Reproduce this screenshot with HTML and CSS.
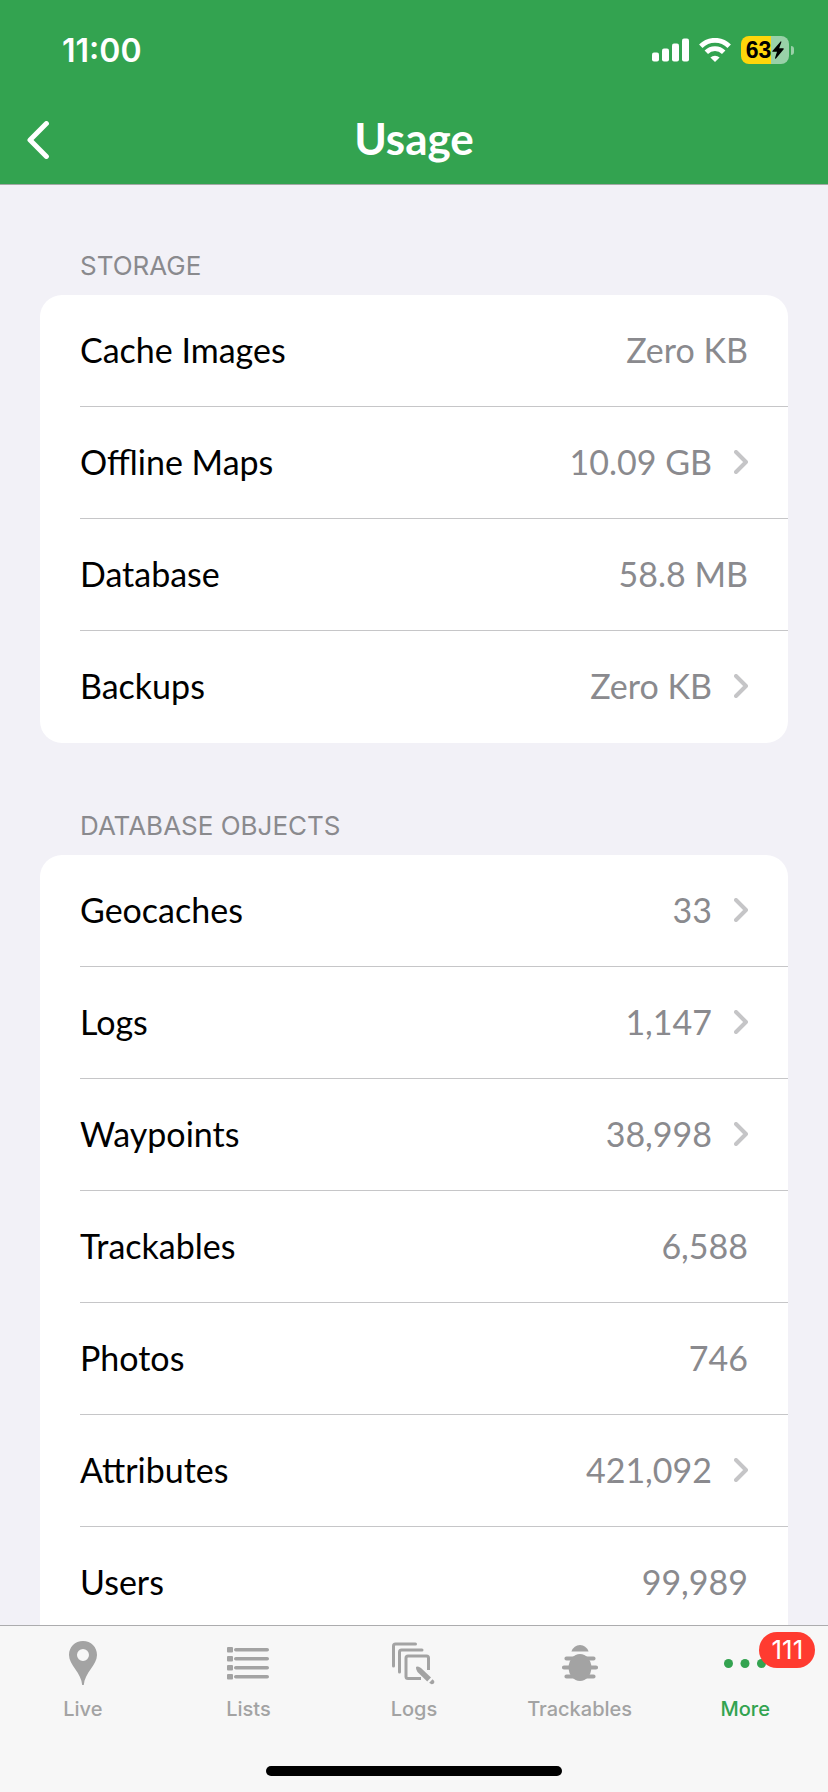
FILE: index.html
```html
<!DOCTYPE html>
<html lang="en">
<head>
    <meta charset="UTF-8">
    <meta name="viewport" content="width=device-width, initial-scale=1.0">
    <title>Usage</title>
    <link rel="stylesheet" href="styles.css">
</head>
<body>
    <!-- shared chevron for rows that open a detail page -->
    <svg class="sprite" aria-hidden="true">
        <symbol id="chevron" viewBox="0 0 14 24">
            <path d="M2 2 L12 12 L2 22" fill="none" stroke="currentColor" stroke-width="4" stroke-linecap="round" stroke-linejoin="round"/>
        </symbol>
    </svg>

    <header class="header">
        <div class="status-bar">
            <span class="time">11:00</span>
            <div class="status-icons">
                <svg class="signal" viewBox="0 0 37 24" fill="#fff">
                    <rect x="0" y="14.5" width="7" height="9" rx="2"/>
                    <rect x="10" y="10.5" width="7" height="13" rx="2"/>
                    <rect x="20" y="5.5" width="7" height="18" rx="2"/>
                    <rect x="30" y="0.5" width="7" height="23" rx="2"/>
                </svg>
                <svg class="wifi" viewBox="0 0 32 24">
                    <path d="M1.8 8.2 A20 20 0 0 1 30.2 8.2" fill="none" stroke="#fff" stroke-width="4.8"/>
                    <path d="M7.3 14.2 A12.2 12.2 0 0 1 24.7 14.2" fill="none" stroke="#fff" stroke-width="4.8"/>
                    <path d="M16 24 L11.4 19.5 A6.6 6.6 0 0 1 20.6 19.5 Z" fill="#fff"/>
                </svg>
                <div class="battery">
                    <div class="battery-body">
                        <span>63</span>
                        <svg class="bolt" viewBox="0 0 12 18"><path d="M8.6 0.4 L0.4 10 Q0 10.8 0.9 10.8 L5 10.8 L3 17 Q3 18.2 4 17.4 L11.7 8.3 Q12 7.4 11.2 7.3 L7.2 7.3 L9.4 1 Q9.4 0 8.6 0.4 Z"/></svg>
                    </div>
                    <div class="battery-tip"></div>
                </div>
            </div>
        </div>
        <div class="nav-bar">
            <button class="back" type="button" aria-label="Back">
                <svg viewBox="0 0 22 38"><path d="M19.4 2.6 L3 19 L19.4 35.4" fill="none" stroke="#fff" stroke-width="5" stroke-linecap="round" stroke-linejoin="round"/></svg>
            </button>
            <h1>Usage</h1>
        </div>
    </header>

    <main class="content">
        <section class="section">
            <h2>STORAGE</h2>
            <ul class="card">
                <li><div class="row"><span>Cache Images</span><span class="value">Zero KB</span></div></li>
                <li><a class="row" href="#maps"><span>Offline Maps</span><span class="value">10.09 GB</span><svg class="chevron"><use href="#chevron"/></svg></a></li>
                <li><div class="row"><span>Database</span><span class="value">58.8 MB</span></div></li>
                <li><a class="row" href="#backups"><span>Backups</span><span class="value">Zero KB</span><svg class="chevron"><use href="#chevron"/></svg></a></li>
            </ul>
        </section>

        <section class="section">
            <h2>DATABASE OBJECTS</h2>
            <ul class="card card-open">
                <li><a class="row" href="#geocaches"><span>Geocaches</span><span class="value">33</span><svg class="chevron"><use href="#chevron"/></svg></a></li>
                <li><a class="row" href="#logs"><span>Logs</span><span class="value">1,147</span><svg class="chevron"><use href="#chevron"/></svg></a></li>
                <li><a class="row" href="#waypoints"><span>Waypoints</span><span class="value">38,998</span><svg class="chevron"><use href="#chevron"/></svg></a></li>
                <li><div class="row"><span>Trackables</span><span class="value">6,588</span></div></li>
                <li><div class="row"><span>Photos</span><span class="value">746</span></div></li>
                <li><a class="row" href="#attributes"><span>Attributes</span><span class="value">421,092</span><svg class="chevron"><use href="#chevron"/></svg></a></li>
                <li><div class="row"><span>Users</span><span class="value">99,989</span></div></li>
            </ul>
        </section>
    </main>

    <footer class="footer">
        <nav class="tabs">
            <a class="tab" href="#live">
                <svg class="tab-icon" viewBox="0 0 48 48">
                    <path fill="currentColor" fill-rule="evenodd" d="M24 2 C16 2 10 8 10 16 C10 26 22.5 34 23.2 46 L24.8 46 C25.5 34 38 26 38 16 C38 8 32 2 24 2 Z M24 10 A6 6 0 1 1 24 22 A6 6 0 1 1 24 10 Z"/>
                </svg>
                <span>Live</span>
            </a>
            <a class="tab" href="#lists">
                <svg class="tab-icon" viewBox="0 0 48 48" fill="currentColor">
                    <rect x="3" y="8" width="6" height="5.4" rx="1"/>
                    <rect x="3" y="17" width="6" height="5.4" rx="1"/>
                    <rect x="3" y="26" width="6" height="5.4" rx="1"/>
                    <rect x="3" y="35" width="6" height="5.4" rx="1"/>
                    <rect x="10" y="9" width="35" height="3.6" rx="1.8"/>
                    <rect x="10" y="18" width="35" height="3.6" rx="1.8"/>
                    <rect x="10" y="27" width="35" height="3.6" rx="1.8"/>
                    <rect x="10" y="36" width="35" height="3.6" rx="1.8"/>
                </svg>
                <span>Lists</span>
            </a>
            <a class="tab" href="#tab-logs">
                <svg class="tab-icon" viewBox="0 0 48 48">
                    <g fill="none" stroke="currentColor" stroke-width="3" stroke-linecap="round">
                        <path d="M3.5 27 V7 Q3.5 5 5.5 5 H25.500"/>
                        <path d="M9.5 33 V13 Q9.5 11 11.5 11 H32"/>
                        <path stroke-linecap="butt" d="M38.500 31 V19 Q38.500 17 36.500 17 H18 Q16 17 16 19 V37.500 Q16 39.500 18 39.500 H31"/>
                    </g>
                    <path fill="currentColor" d="M26 28 Q27 26.800 31 29 L41 38.600 L37.200 42.400 L27.500 33 Q25.500 30 26 28 Z"/>
                    <path fill="currentColor" d="M42.500 40.300 L44.200 42 Q45 45 41.500 45.200 L39.200 43.800 Z"/>
                </svg>
                <span>Logs</span>
            </a>
            <a class="tab" href="#trackables">
                <svg class="tab-icon" viewBox="0 0 48 48">
                    <path fill="currentColor" d="M15.400 12.500 Q18 6 24 6 Q30 6 32.600 12.500 Z"/>
                    <ellipse cx="24" cy="28.500" rx="11.400" ry="13.500" fill="currentColor"/>
                    <path d="M10.500 19.500 H37.500 M8 28.500 H40 M10.500 37.500 H37.500" stroke="currentColor" stroke-width="4.200" stroke-linecap="round"/>
                </svg>
                <span>Trackables</span>
            </a>
            <a class="tab active" href="#more">
                <span class="badge">111</span>
                <svg class="tab-icon" viewBox="0 0 48 48" fill="currentColor">
                    <circle cx="7.500" cy="24.500" r="4.500"/>
                    <circle cx="24" cy="24.500" r="4.500"/>
                    <circle cx="40.500" cy="24.500" r="4.500"/>
                </svg>
                <span>More</span>
            </a>
        </nav>
        <div class="home-indicator"></div>
    </footer>
</body>
</html>
```
FILE: styles.css
```css
* {
    box-sizing: border-box;
}

body {
    margin: 0;
    height: 100vh;
    display: flex;
    flex-direction: column;
    font-family: 'Lato', sans-serif;
    background-color: #f2f1f7;
    color: #000;
}

a {
    color: inherit;
    text-decoration: none;
}

svg {
    display: block;
}

.sprite {
    display: none;
}

/* Header */
.header {
    background-color: #33a350;
    color: #fff;
    border-bottom: 1px solid #a3a8a5;
}

.status-bar {
    display: flex;
    justify-content: space-between;
    align-items: center;
    height: 96px;
    padding: 4px 34px 0 62px;
    font-family: 'Inter', sans-serif;
}

.time {
    font-size: 32px;
    font-weight: 600;
}

.status-icons {
    display: flex;
    align-items: center;
    gap: 10px;
}

.signal {
    width: 37px;
    height: 24px;
}

.wifi {
    width: 32px;
    height: 24px;
}

.battery {
    display: flex;
    align-items: center;
    gap: 2px;
}

.battery-body {
    display: flex;
    align-items: center;
    justify-content: center;
    gap: 1px;
    width: 48px;
    height: 28px;
    border-radius: 8px;
    background: linear-gradient(90deg, #ffd60a 30px, #99d1a8 30px);
    color: #000;
    font-family: 'Liberation Sans', sans-serif;
    font-size: 23px;
    font-weight: 700;
}

.bolt {
    width: 12px;
    height: 18px;
}

.battery-tip {
    width: 3px;
    height: 9px;
    border-radius: 0 4px 4px 0;
    background-color: #99d1a8;
}

.nav-bar {
    display: grid;
    grid-template-columns: 80px 1fr 80px;
    height: 88px;
}

.nav-bar h1 {
    margin: 0;
    font-size: 44px;
    line-height: 84px;
    font-weight: 700;
    text-align: center;
}

.back {
    padding: 0 27px;
    border: none;
    background: none;
    cursor: pointer;
}

.back svg {
    width: 22px;
    height: 38px;
}

/* Lists */
.content {
    flex: 1;
    min-height: 0;
    overflow-y: auto;
    scrollbar-width: none;
    padding: 0 40px;
}

.section {
    padding-top: 64px;
}

.section + .section {
    padding-top: 66px;
}

.section h2 {
    margin: 0 40px 12px;
    font-family: 'Inter', sans-serif;
    font-size: 26px;
    line-height: 34px;
    font-weight: 400;
    color: #8a8a8e;
}

.card {
    margin: 0;
    padding: 0 0 0 40px;
    list-style: none;
    background-color: #fff;
    border-radius: 22px;
}

/* long list, runs on under the tab bar */
.card-open {
    border-radius: 22px 22px 0 0;
}

.row {
    display: flex;
    align-items: center;
    height: 112px;
    padding-right: 40px;
    padding-bottom: 2px;
    border-bottom: 1px solid #c6c6c8;
    font-size: 34px;
}

.card li:last-child .row {
    border-bottom-color: transparent;
}

.value {
    margin-left: auto;
    color: #8a8a8e;
}

.chevron {
    width: 14px;
    height: 24px;
    margin-left: 22px;
    color: #c5c5c7;
}

/* Tab bar */
.footer {
    background-color: #f7f7f7;
    border-top: 1px solid #acacae;
    padding-bottom: 16px;
}

.tabs {
    display: grid;
    grid-template-columns: repeat(5, 1fr);
    height: 140px;
}

.tab {
    position: relative;
    display: flex;
    flex-direction: column;
    align-items: center;
    gap: 10px;
    padding-top: 13px;
    font-family: 'Inter', sans-serif;
    font-size: 20px;
    line-height: 24px;
    font-weight: 500;
    color: #a3a3a3;
}

.tab-icon {
    width: 48px;
    height: 48px;
}

.tab.active {
    color: #33a350;
}

.badge {
    position: absolute;
    top: 6px;
    left: 97px;
    width: 56px;
    border-radius: 18px;
    background-color: #ff3b30;
    color: #fff;
    font-size: 26px;
    line-height: 36px;
    font-weight: 400;
    text-align: center;
}

.home-indicator {
    width: 296px;
    height: 10px;
    margin: 0 auto;
    border-radius: 5px;
    background-color: #000;
}
```
